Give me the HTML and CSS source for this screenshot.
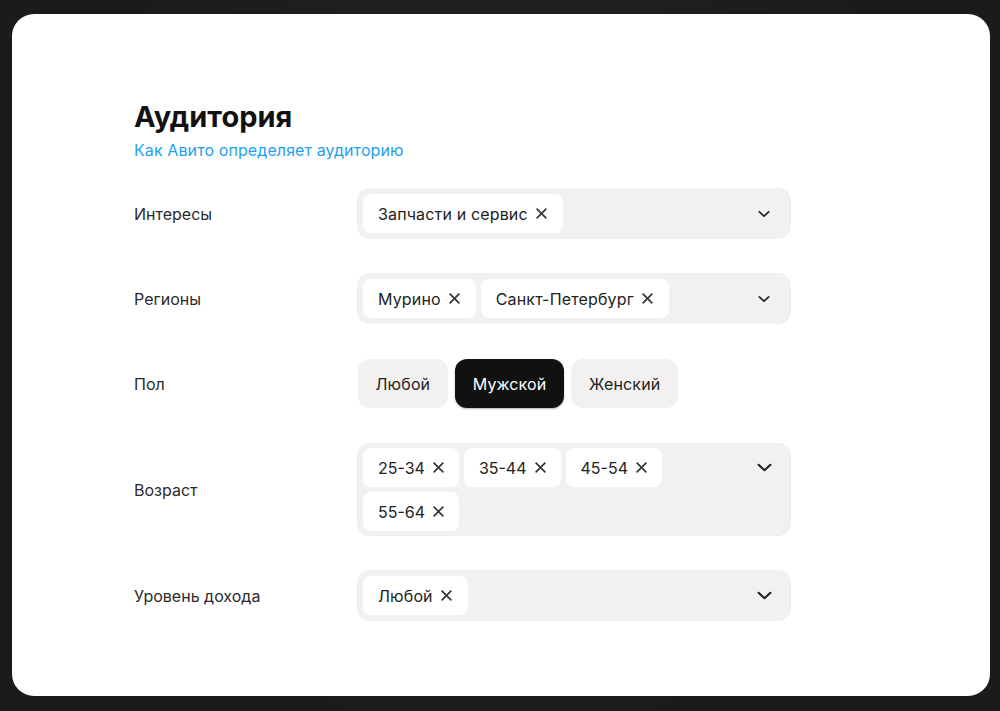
FILE: index.html
```html
<!DOCTYPE html>
<html lang="ru">
<head>
  <meta charset="UTF-8" />
  <meta name="viewport" content="width=device-width, initial-scale=1.0" />
  <title>Аудитория</title>
  <link rel="stylesheet" href="styles.css">
</head>
<body>
  <div class="card">
    <h1>Аудитория</h1>
    <a class="help" href="#">Как Авито определяет аудиторию</a>

    <div class="form">
      <div class="row">
        <span class="label">Интересы</span>
        <div class="field">
          <div class="chips">
            <span class="chip">Запчасти и сервис <svg class="x" viewBox="0 0 12 12"><path d="M1.5 1.5l9 9M10.5 1.5l-9 9"/></svg></span>
          </div>
          <svg class="chevron" viewBox="0 0 14 8"><path d="M1.5 1.5L7 6.5l5.5-5"/></svg>
        </div>
      </div>

      <div class="row">
        <span class="label">Регионы</span>
        <div class="field">
          <div class="chips">
            <span class="chip">Мурино <svg class="x" viewBox="0 0 12 12"><path d="M1.5 1.5l9 9M10.5 1.5l-9 9"/></svg></span>
            <span class="chip">Санкт-Петербург <svg class="x" viewBox="0 0 12 12"><path d="M1.5 1.5l9 9M10.5 1.5l-9 9"/></svg></span>
          </div>
          <svg class="chevron" viewBox="0 0 14 8"><path d="M1.5 1.5L7 6.5l5.5-5"/></svg>
        </div>
      </div>

      <div class="row">
        <span class="label">Пол</span>
        <div class="segments">
          <button class="seg">Любой</button>
          <button class="seg active">Мужской</button>
          <button class="seg">Женский</button>
        </div>
      </div>

      <div class="row">
        <span class="label">Возраст</span>
        <div class="field multi">
          <div class="chips">
            <span class="chip">25-34 <svg class="x" viewBox="0 0 12 12"><path d="M1.5 1.5l9 9M10.5 1.5l-9 9"/></svg></span>
            <span class="chip">35-44 <svg class="x" viewBox="0 0 12 12"><path d="M1.5 1.5l9 9M10.5 1.5l-9 9"/></svg></span>
            <span class="chip">45-54 <svg class="x" viewBox="0 0 12 12"><path d="M1.5 1.5l9 9M10.5 1.5l-9 9"/></svg></span>
            <span class="chip">55-64 <svg class="x" viewBox="0 0 12 12"><path d="M1.5 1.5l9 9M10.5 1.5l-9 9"/></svg></span>
          </div>
          <svg class="chevron big" viewBox="0 0 14 8"><path d="M1.5 1.5L7 6.5l5.5-5"/></svg>
        </div>
      </div>

      <div class="row">
        <span class="label">Уровень дохода</span>
        <div class="field">
          <div class="chips">
            <span class="chip">Любой <svg class="x" viewBox="0 0 12 12"><path d="M1.5 1.5l9 9M10.5 1.5l-9 9"/></svg></span>
          </div>
          <svg class="chevron big" viewBox="0 0 14 8"><path d="M1.5 1.5L7 6.5l5.5-5"/></svg>
        </div>
      </div>
    </div>
  </div>
</body>
</html>
```

FILE: styles.css
```css
html, body {
  height: 100%;
}
body {
  margin: 0;
  padding: 14px 10px 15px 12px;
  box-sizing: border-box;
  background-color: #1d1d1d;
  background-image: radial-gradient(circle at 50% 40%, #262626 0%, #1b1b1b 70%);
  font-family: Inter, "Noto Sans", sans-serif;
  color: #222;
}
.card {
  height: 682px;
  box-sizing: border-box;
  background: #fff;
  border-radius: 22px;
  padding: 86px 0 0 122px;
}
h1 {
  margin: 0;
  font-size: 29px;
  line-height: 34px;
  font-weight: 700;
  color: #111;
}
.help {
  display: inline-block;
  margin-top: 5px;
  font-size: 16px;
  line-height: 22px;
  color: #1ea0ef;
  text-decoration: none;
  letter-spacing: 0.1px;
}
.form {
  margin-top: 28px;
  display: flex;
  flex-direction: column;
  gap: 36px;
}
.row {
  display: grid;
  grid-template-columns: 224px 432px;
  align-items: center;
}
.label {
  font-size: 16px;
  color: #2b2b2b;
}
.field {
  display: flex;
  align-items: flex-start;
  background: #f2f1ef;
  border-radius: 12px;
  padding: 5px;
  box-shadow: 0 0 0 1px #f0efed;
}
.chips {
  flex: 1;
  display: flex;
  flex-wrap: wrap;
  gap: 5px;
}
.field.multi {
  padding: 4px 5px;
}
.chip {
  display: inline-flex;
  align-items: center;
  gap: 7px;
  height: 39px;
  padding: 0 15px;
  background: #fff;
  border-radius: 8px;
  font-size: 16px;
  letter-spacing: 0.15px;
  color: #222;
}
.field.multi .chip {
  padding: 0 14px 0 15px;
  letter-spacing: 0;
}
.x {
  width: 13px;
  height: 13px;
  fill: none;
  stroke: #333;
  stroke-width: 1.5;
}
.chevron {
  width: 12px;
  height: 8px;
  margin: 16px 15px 0 0;
  fill: none;
  stroke: #222;
  stroke-width: 2;
  stroke-linecap: round;
  stroke-linejoin: round;
}
.chevron.big {
  width: 15px;
  height: 9px;
  margin: 15px 13px 0 0;
}
.segments {
  display: flex;
  gap: 7.5px;
}
.seg {
  height: 49px;
  padding: 0 17.5px;
  border: none;
  border-radius: 12px;
  background: #f2f1ef;
  font-family: inherit;
  font-size: 16px;
  letter-spacing: 0.15px;
  color: #222;
}
.seg.active {
  background: #111;
  color: #fff;
  box-shadow: 0 1px 2px rgba(0, 0, 0, 0.3);
}
```
